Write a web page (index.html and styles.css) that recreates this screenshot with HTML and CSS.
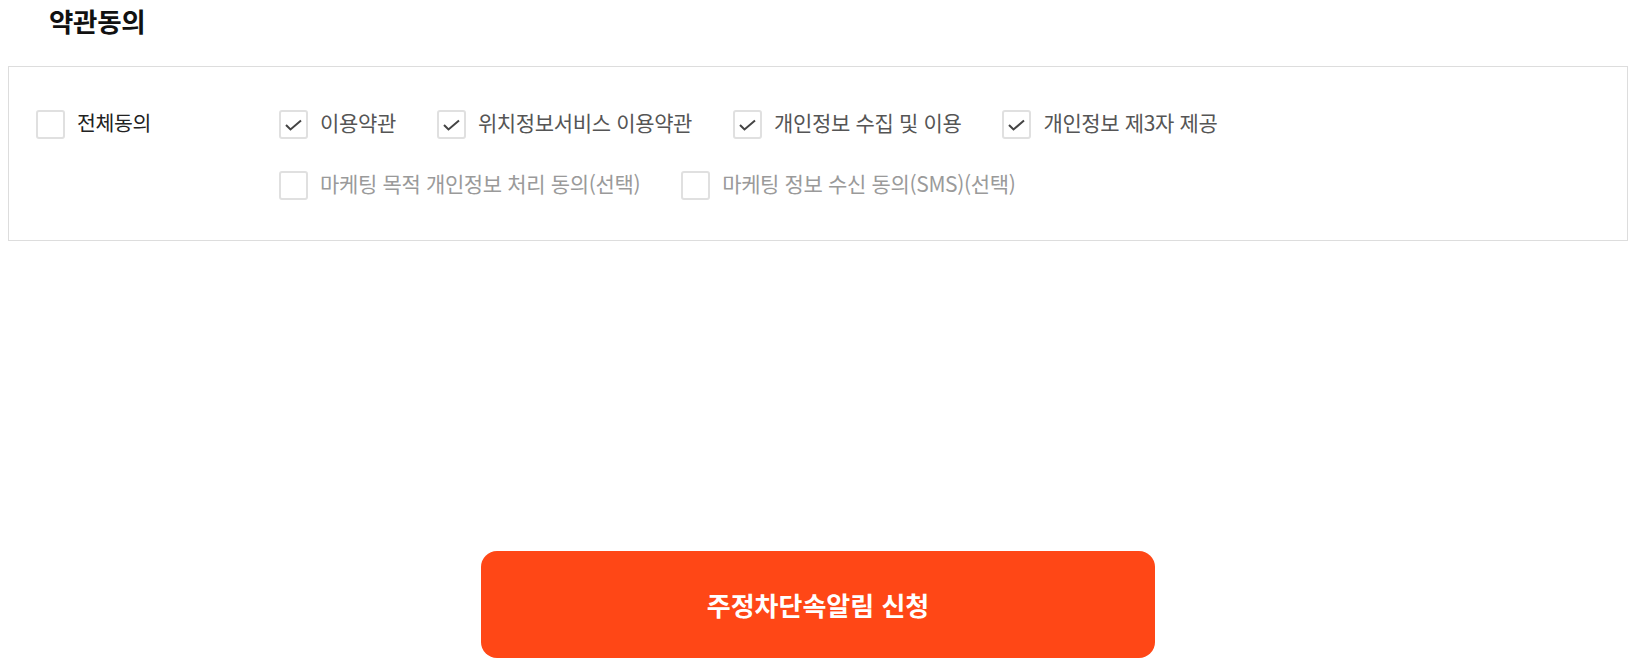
FILE: index.html
```html
<!DOCTYPE html>
<html lang="ko">
<head>
<meta charset="utf-8">
<link rel="stylesheet" href="styles.css">
</head>
<body>
<div class="page">
  <h2 class="title">약관동의</h2>
  <div class="terms">
    <div class="all">
      <label class="item">
        <span class="box"></span>
        <span class="label label-all">전체동의</span>
      </label>
    </div>
    <div class="list">
      <div class="row">
        <label class="item"><span class="box checked"><svg viewBox="0 0 25 25" width="25" height="25"><path d="M5 13 L9.5 17.5 L20 8.5" fill="none" stroke="#444" stroke-width="2"/></svg></span><span class="label">이용약관</span></label>
        <label class="item"><span class="box checked"><svg viewBox="0 0 25 25" width="25" height="25"><path d="M5 13 L9.5 17.5 L20 8.5" fill="none" stroke="#444" stroke-width="2"/></svg></span><span class="label">위치정보서비스 이용약관</span></label>
        <label class="item"><span class="box checked"><svg viewBox="0 0 25 25" width="25" height="25"><path d="M5 13 L9.5 17.5 L20 8.5" fill="none" stroke="#444" stroke-width="2"/></svg></span><span class="label">개인정보 수집 및 이용</span></label>
        <label class="item"><span class="box checked"><svg viewBox="0 0 25 25" width="25" height="25"><path d="M5 13 L9.5 17.5 L20 8.5" fill="none" stroke="#444" stroke-width="2"/></svg></span><span class="label">개인정보 제3자 제공</span></label>
      </div>
      <div class="row">
        <label class="item"><span class="box"></span><span class="label muted">마케팅 목적 개인정보 처리 동의(선택)</span></label>
        <label class="item"><span class="box"></span><span class="label muted">마케팅 정보 수신 동의(SMS)(선택)</span></label>
      </div>
    </div>
  </div>
  <div class="actions">
    <button class="submit" type="button">주정차단속알림 신청</button>
  </div>
</div>
</body>
</html>
```
FILE: styles.css
```css
* { box-sizing: border-box; }
html, body {
  margin: 0;
  padding: 0;
  background: #fff;
  font-family: "Noto Sans CJK KR", "Noto Sans", sans-serif;
}
.page {
  width: 1639px;
  height: 670px;
  padding: 0 11px 0 8px;
}
.title {
  margin: 0;
  padding-left: 41px;
  height: 66px;
  line-height: 42px;
  font-size: 26.5px;
  font-weight: 700;
  color: #111;
  letter-spacing: -0.3px;
}
.terms {
  display: flex;
  border: 1px solid #ddd;
  padding: 43px 26px 42px 27px;
  height: 175px;
}
.all {
  width: 243px;
  flex: none;
}
.list {
  display: flex;
  flex-direction: column;
  gap: 32px;
}
.row {
  display: flex;
  gap: 41px;
}
.item {
  display: flex;
  align-items: center;
  gap: 12px;
  height: 29px;
}
.box {
  width: 29px;
  height: 29px;
  border: 2px solid #e0e0e0;
  border-radius: 3px;
  flex: none;
  display: flex;
  align-items: center;
  justify-content: center;
  background: #fff;
}
.box svg { display: block; }
.label {
  font-size: 21px;
  color: #555;
  line-height: 25px;
  padding-bottom: 4px;
  white-space: nowrap;
  letter-spacing: -0.35px;
}
.label-all { color: #222; font-size: 20.5px; }
.muted { color: #9a9a9a; }
.actions {
  display: flex;
  justify-content: center;
  padding-top: 310px;
}
.submit {
  width: 674px;
  height: 107px;
  border: none;
  border-radius: 16px;
  background: #ff4716;
  color: #fff;
  font-family: "Noto Sans CJK KR", "Noto Sans", sans-serif;
  font-size: 26px;
  font-weight: 700;
  cursor: pointer;
}
```
